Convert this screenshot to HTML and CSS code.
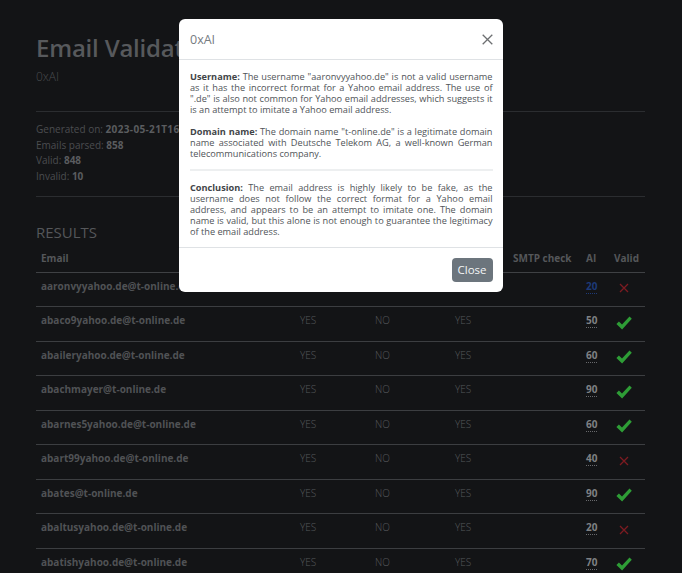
FILE: index.html
```html
<!DOCTYPE html>
<html lang="en">
<head>
<meta charset="utf-8">
<title>Email Validation Report</title>
<link rel="stylesheet" href="styles.css">
</head>
<body class="modal-open">
<main class="page">
  <h1 class="title">Email Validation Report</h1>
  <p class="subtitle">0xAI</p>
  <hr class="rule">
  <div class="stats">
    <div>Generated on: <b class="stamp">2023-05-21T16:42:17</b></div>
    <div>Emails parsed: <b>858</b></div>
    <div>Valid: <b>848</b></div>
    <div>Invalid: <b>10</b></div>
  </div>
  <hr class="rule rule-2">
  <h2 class="section">RESULTS</h2>
  <table class="results">
    <colgroup>
      <col class="c-email"><col class="c-fmt"><col class="c-disp"><col class="c-mx"><col class="c-smtp"><col class="c-ai"><col class="c-valid">
    </colgroup>
    <thead>
      <tr><th>Email</th><th>Syntax</th><th>Disposable</th><th>MX</th><th>SMTP check</th><th>AI</th><th>Valid</th></tr>
    </thead>
    <tbody>
      <tr><td class="email">aaronvyyahoo.de@t-online.de</td><td class="yn">YES</td><td class="yn">NO</td><td class="yn">YES</td><td></td><td><abbr class="score active" title="AI analysis">20</abbr></td><td><span class="ic"><svg class="x" width="10" height="10" viewBox="0 0 10 10"><path d="M1 1L9 9M9 1L1 9"/></svg></span></td></tr>
      <tr><td class="email">abaco9yahoo.de@t-online.de</td><td class="yn">YES</td><td class="yn">NO</td><td class="yn">YES</td><td></td><td><abbr class="score" title="AI analysis">50</abbr></td><td><span class="ic"><svg class="ok" width="16" height="14" viewBox="0 0 16 14"><path d="M0.4 7.9L2.9 5.5L6 8.4L13.5 0.5L15.8 2.8L6.1 13.6Z"/></svg></span></td></tr>
      <tr><td class="email">abaileryahoo.de@t-online.de</td><td class="yn">YES</td><td class="yn">NO</td><td class="yn">YES</td><td></td><td><abbr class="score" title="AI analysis">60</abbr></td><td><span class="ic"><svg class="ok" width="16" height="14" viewBox="0 0 16 14"><path d="M0.4 7.9L2.9 5.5L6 8.4L13.5 0.5L15.8 2.8L6.1 13.6Z"/></svg></span></td></tr>
      <tr><td class="email">abachmayer@t-online.de</td><td class="yn">YES</td><td class="yn">NO</td><td class="yn">YES</td><td></td><td><abbr class="score" title="AI analysis">90</abbr></td><td><span class="ic"><svg class="ok" width="16" height="14" viewBox="0 0 16 14"><path d="M0.4 7.9L2.9 5.5L6 8.4L13.5 0.5L15.8 2.8L6.1 13.6Z"/></svg></span></td></tr>
      <tr><td class="email">abarnes5yahoo.de@t-online.de</td><td class="yn">YES</td><td class="yn">NO</td><td class="yn">YES</td><td></td><td><abbr class="score" title="AI analysis">60</abbr></td><td><span class="ic"><svg class="ok" width="16" height="14" viewBox="0 0 16 14"><path d="M0.4 7.9L2.9 5.5L6 8.4L13.5 0.5L15.8 2.8L6.1 13.6Z"/></svg></span></td></tr>
      <tr><td class="email">abart99yahoo.de@t-online.de</td><td class="yn">YES</td><td class="yn">NO</td><td class="yn">YES</td><td></td><td><abbr class="score" title="AI analysis">40</abbr></td><td><span class="ic"><svg class="x" width="10" height="10" viewBox="0 0 10 10"><path d="M1 1L9 9M9 1L1 9"/></svg></span></td></tr>
      <tr><td class="email">abates@t-online.de</td><td class="yn">YES</td><td class="yn">NO</td><td class="yn">YES</td><td></td><td><abbr class="score" title="AI analysis">90</abbr></td><td><span class="ic"><svg class="ok" width="16" height="14" viewBox="0 0 16 14"><path d="M0.4 7.9L2.9 5.5L6 8.4L13.5 0.5L15.8 2.8L6.1 13.6Z"/></svg></span></td></tr>
      <tr><td class="email">abaltusyahoo.de@t-online.de</td><td class="yn">YES</td><td class="yn">NO</td><td class="yn">YES</td><td></td><td><abbr class="score" title="AI analysis">20</abbr></td><td><span class="ic"><svg class="x" width="10" height="10" viewBox="0 0 10 10"><path d="M1 1L9 9M9 1L1 9"/></svg></span></td></tr>
      <tr><td class="email">abatishyahoo.de@t-online.de</td><td class="yn">YES</td><td class="yn">NO</td><td class="yn">YES</td><td></td><td><abbr class="score" title="AI analysis">70</abbr></td><td><span class="ic"><svg class="ok" width="16" height="14" viewBox="0 0 16 14"><path d="M0.4 7.9L2.9 5.5L6 8.4L13.5 0.5L15.8 2.8L6.1 13.6Z"/></svg></span></td></tr>
    </tbody>
  </table>
</main>

<div class="modal" role="dialog" aria-modal="true">
  <div class="modal-header">
    <h5 class="modal-title">0xAI</h5>
    <button class="btn-x" aria-label="Close"><svg width="11" height="11" viewBox="0 0 11 11"><path d="M0.7 0.7L10.3 10.3M10.3 0.7L0.7 10.3"/></svg></button>
  </div>
  <div class="modal-body">
    <p class="para">
      <span class="ln"><b>Username:</b> The username "aaronvyyahoo.de" is not a valid username</span>
      <span class="ln">as it has the incorrect format for a Yahoo email address. The use of</span>
      <span class="ln">".de" is also not common for Yahoo email addresses, which suggests it</span>
      <span class="ln last">is an attempt to imitate a Yahoo email address.</span>
    </p>
    <p class="para">
      <span class="ln"><b>Domain name:</b> The domain name "t-online.de" is a legitimate domain</span>
      <span class="ln">name associated with Deutsche Telekom AG, a well-known German</span>
      <span class="ln last">telecommunications company.</span>
    </p>
    <hr class="modal-sep">
    <p class="para">
      <span class="ln"><b>Conclusion:</b> The email address is highly likely to be fake, as the</span>
      <span class="ln">username does not follow the correct format for a Yahoo email</span>
      <span class="ln">address, and appears to be an attempt to imitate one. The domain</span>
      <span class="ln">name is valid, but this alone is not enough to guarantee the legitimacy</span>
      <span class="ln last">of the email address.</span>
    </p>
  </div>
  <div class="modal-footer">
    <button class="btn-secondary">Close</button>
  </div>
</div>
</body>
</html>
```
FILE: styles.css
```css
html, body {
  margin: 0;
  height: 100%;
}
body {
  background: #131416;
  font-family: "Open Sans", "Noto Sans", sans-serif;
  font-size: 10px;
  color: #4e5053;
}
body.modal-open {
  overflow: hidden;
}
.page {
  width: 609px;
  padding: 32.5px 0 0 36px;
}
.title {
  margin: 0;
  font-size: 24px;
  line-height: 30px;
  font-weight: 600;
  letter-spacing: -0.2px;
  color: #57595c;
}
.subtitle {
  margin: 6px 0 0;
  font-size: 12px;
  line-height: 16px;
  font-weight: 300;
  color: #4a4c4f;
}
.rule {
  margin: 26.5px 0 0;
  border: 0;
  border-top: 1px solid #2b2d30;
  height: 0;
}
.rule-2 {
  margin-top: 11.4px;
}
.stats {
  margin-top: 10.2px;
  line-height: 15.6px;
  color: #4b4d50;
}
.stats b {
  font-weight: 700;
  color: #5a5c5f;
}
.stats .stamp {
  letter-spacing: 0.35px;
}
.section {
  margin: 25px 0 0;
  font-size: 15px;
  line-height: 20px;
  font-weight: 400;
  color: #55575a;
}
.results {
  margin-top: 4.2px;
  width: 609px;
  table-layout: fixed;
  border-collapse: collapse;
}
.c-email { width: 259px; }
.c-fmt { width: 75px; }
.c-disp { width: 80px; }
.c-mx { width: 58px; }
.c-smtp { width: 73px; }
.c-ai { width: 28px; }
.c-valid { width: 36px; }
.results th {
  text-align: left;
  padding: 5px 5px;
  line-height: 15.6px;
  font-weight: 700;
  color: #55575a;
  border-bottom: 1px solid #3f4144;
  white-space: nowrap;
  overflow: hidden;
}
.results td {
  padding: 6px 5px 8px;
  line-height: 15.6px;
  vertical-align: top;
  border-bottom: 1px solid #3c3e41;
  white-space: nowrap;
}
.email {
  font-weight: 700;
  color: #505255;
}
.yn {
  font-weight: 300;
  color: #56585b;
}
.score {
  font-weight: 700;
  color: #7f8184;
  text-decoration: none;
  border-bottom: 1px dotted #68696c;
}
.score.active {
  color: #1d3a78;
  border-bottom-color: #1d3a78;
}
.ic {
  display: flex;
  align-items: center;
  height: 19.5px;
}
.x {
  margin-left: 5px;
  fill: none;
  stroke: #7c1b21;
  stroke-width: 1.3;
}
.ok {
  margin-left: 2px;
  fill: #2e9d36;
}

/* modal */
.modal {
  position: absolute;
  left: 179px;
  top: 19px;
  width: 324px;
  background: #fff;
  border-radius: 6px;
  overflow: hidden;
}
.modal-header {
  display: flex;
  align-items: center;
  justify-content: space-between;
  padding: 12px 10.5px 10px 11px;
  border-bottom: 1px solid #dfe2e5;
}
.modal-title {
  margin: 0;
  font-size: 12.5px;
  line-height: 18px;
  font-weight: 400;
  color: #767c82;
}
.btn-x {
  display: flex;
  padding: 0;
  border: 0;
  background: none;
  margin-top: -2px;
}
.btn-x svg {
  fill: none;
  stroke: #6d6f71;
  stroke-width: 1.3;
}
.modal-body {
  padding: 10.5px 10.5px 10px 11px;
  font-size: 9.2px;
  line-height: 11px;
  word-spacing: -0.3px;
  color: #505458;
}
.para {
  margin: 0 0 11px;
}
.para:last-child {
  margin-bottom: 0;
}
.para b {
  font-weight: 700;
  color: #424548;
}
.ln {
  display: block;
  text-align: justify;
  text-align-last: justify;
}
.ln.last {
  text-align-last: left;
  word-spacing: 0;
}
.modal-sep {
  margin: 0 0 11px;
  border: 0;
  border-top: 1px solid #dcdfe2;
  height: 0;
  transform: translateY(-0.5px);
}
.modal-footer {
  display: flex;
  justify-content: flex-end;
  padding: 10.7px 10.5px 10.3px;
  border-top: 1px solid #dfe2e5;
}
.btn-secondary {
  width: 41px;
  height: 24px;
  padding: 0;
  border: 0;
  border-radius: 4px;
  background: #6c757d;
  color: #f4f5f6;
  font-family: "Open Sans", "Noto Sans", sans-serif;
  font-size: 11.5px;
  line-height: 24px;
}
```
